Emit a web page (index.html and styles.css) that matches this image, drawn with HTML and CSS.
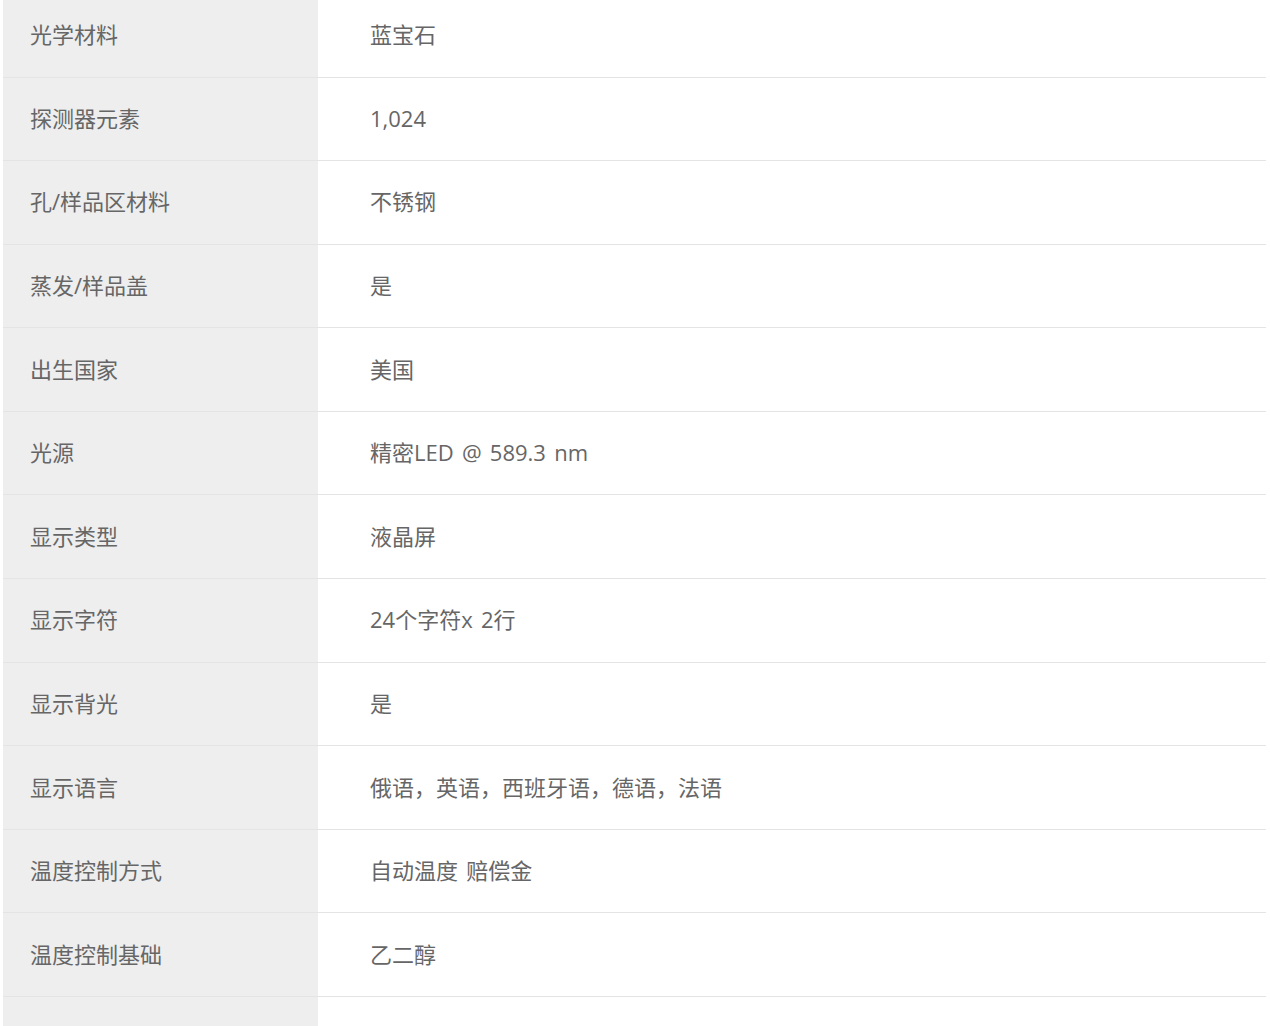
FILE: index.html
```html
<!DOCTYPE html>
<html lang="zh-CN">
<head>
<meta charset="utf-8">
<title>规格</title>
<link rel="stylesheet" href="styles.css">
</head>
<body>
<table class="spec">
  <tbody>
    <tr><th>光学材料</th><td>蓝宝石</td></tr>
    <tr><th>探测器元素</th><td>1,024</td></tr>
    <tr><th>孔/样品区材料</th><td>不锈钢</td></tr>
    <tr><th>蒸发/样品盖</th><td>是</td></tr>
    <tr><th>出生国家</th><td>美国</td></tr>
    <tr><th>光源</th><td>精密LED @ 589.3 nm</td></tr>
    <tr><th>显示类型</th><td>液晶屏</td></tr>
    <tr><th>显示字符</th><td>24个字符x 2行</td></tr>
    <tr><th>显示背光</th><td>是</td></tr>
    <tr><th>显示语言</th><td>俄语，英语，西班牙语，德语，法语</td></tr>
    <tr><th>温度控制方式</th><td>自动温度 赔偿金</td></tr>
    <tr><th>温度控制基础</th><td>乙二醇</td></tr>
    <tr><th>&nbsp;</th><td>&nbsp;</td></tr>
  </tbody>
</table>
</body>
</html>
```

FILE: styles.css
```css
html, body {
  margin: 0;
  padding: 0;
  background: #ffffff;
}

body {
  padding-left: 3px;
  font-family: "Open Sans", "Noto Sans CJK SC", sans-serif;
  font-size: 22px;
  word-spacing: 2.5px;
  color: #666666;
}

.spec {
  width: 1263px;
  border-collapse: collapse;
  margin-top: -6.6px;
}

.spec th,
.spec td {
  height: 83.6px;
  padding: 0 0 2px 0;
  border-bottom: 1px solid #e4e4e4;
  vertical-align: middle;
  text-align: left;
  font-weight: normal;
  line-height: 24px;
  box-sizing: border-box;
}

.spec th {
  width: 315px;
  background: #eeeeee;
  padding-left: 27px;
}

.spec td {
  padding-left: 52px;
}
```
